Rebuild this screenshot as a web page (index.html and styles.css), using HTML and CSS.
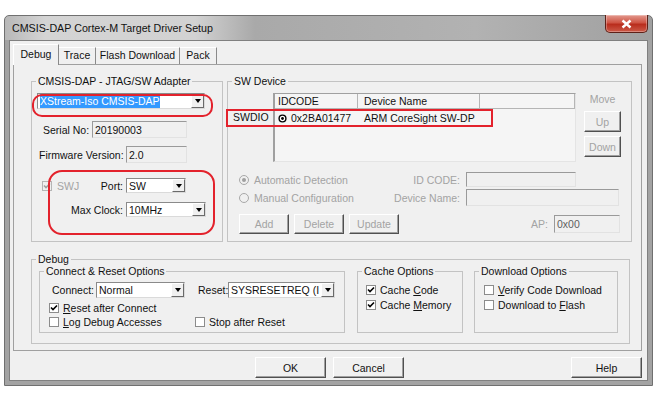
FILE: index.html
```html
<!DOCTYPE html>
<html lang="en">
<head>
  <meta charset="UTF-8" />
  <meta name="viewport" content="width=device-width, initial-scale=1.0"/>
  <title>CMSIS-DAP Cortex-M Target Driver Setup</title>
  <link rel="stylesheet" href="styles.css">
</head>
<body>
  <div class="window">
    <div class="titlebar">
      <span class="title">CMSIS-DAP Cortex-M Target Driver Setup</span>
      <span class="close"><svg width="13" height="10" viewBox="0 0 13 10"><path d="M2.5 1.5 L10.5 8.5 M10.5 1.5 L2.5 8.5" stroke="#fff" stroke-width="2.4"/></svg></span>
    </div>
    <div class="client">
      <div class="tabs">
        <span class="tab tab-debug active">Debug</span>
        <span class="tab tab-trace">Trace</span>
        <span class="tab tab-flash">Flash Download</span>
        <span class="tab tab-pack">Pack</span>
      </div>
      <div class="panel">
        <div class="top-row">
          <fieldset class="group adapter">
            <legend>CMSIS-DAP - JTAG/SW Adapter</legend>
            <div class="group-body">
              <div class="row row-adapter">
                <div class="combo w-adapter"><span class="val"><span class="hl">XStream-Iso CMSIS-DAP</span></span><span class="drop"></span></div>
              </div>
              <div class="row row-serial">
                <span class="lbl lbl-serial">Serial No:</span>
                <span class="field readonly w-serial">20190003</span>
              </div>
              <div class="row row-fw">
                <span class="lbl lbl-fw">Firmware Version:</span>
                <span class="field readonly w-fw">2.0</span>
              </div>
              <div class="row row-port">
                <span class="lbl lbl-port">
                  <span class="chk disabled"><svg width="8" height="8" viewBox="0 0 8 8"><path d="M1 3.5 L3 5.5 L7 1.5" stroke="#a0a0a0" stroke-width="1.6" fill="none"/></svg></span>
                  <span class="dim swj">SWJ</span>
                  <span class="port-text">Port:</span>
                </span>
                <div class="combo w-port"><span class="val">SW</span><span class="drop"></span></div>
              </div>
              <div class="row row-clock">
                <span class="lbl lbl-clock">Max Clock:</span>
                <div class="combo w-clock"><span class="val">10MHz</span><span class="drop"></span></div>
              </div>
              <div class="mark mark-adapter"></div>
              <div class="mark mark-port"></div>
            </div>
          </fieldset>

          <fieldset class="group swdev">
            <legend>SW Device</legend>
            <div class="group-body">
              <div class="dev-row">
                <div class="rowhead"><span>SWDIO</span></div>
                <div class="devlist">
                  <div class="dl-head">
                    <span class="c1">IDCODE</span>
                    <span class="c2">Device Name</span>
                    <span class="c3"></span>
                  </div>
                  <div class="dl-row">
                    <span class="c1"><svg class="dot" width="9" height="9" viewBox="0 0 9 9"><circle cx="4.5" cy="4.5" r="3.4" stroke="#000" stroke-width="1.4" fill="#fff"/><circle cx="4.5" cy="4.5" r="1.4" fill="#000"/></svg>0x2BA01477</span>
                    <span class="c2">ARM CoreSight SW-DP</span>
                  </div>
                </div>
                <div class="move">
                  <span class="move-lbl">Move</span>
                  <span class="btn btn-move dim">Up</span>
                  <span class="btn btn-move dim">Down</span>
                </div>
                <div class="mark mark-dev"></div>
              </div>
              <div class="opt-row opt1">
                <span class="radio-cell dim"><span class="radio checked"></span>Automatic Detection</span>
                <span class="opt-lbl dim">ID CODE:</span>
                <span class="field disabled w-idcode"></span>
              </div>
              <div class="opt-row opt2">
                <span class="radio-cell dim"><span class="radio"></span>Manual Configuration</span>
                <span class="opt-lbl dim">Device Name:</span>
                <span class="field disabled w-devname"></span>
              </div>
              <div class="opt-row opt3">
                <span class="btn btn-edit dim first">Add</span>
                <span class="btn btn-edit dim">Delete</span>
                <span class="btn btn-edit dim">Update</span>
                <span class="ap dim">AP:</span>
                <span class="field disabled w-ap">0x00</span>
              </div>
            </div>
          </fieldset>
        </div>

        <fieldset class="group debug">
          <legend>Debug</legend>
          <div class="debug-row">
            <fieldset class="group conn">
              <legend>Connect &amp; Reset Options</legend>
              <div class="row conn-row">
                <span class="lbl lbl-connect">Connect:</span>
                <div class="combo w-connect"><span class="val">Normal</span><span class="drop"></span></div>
                <span class="lbl lbl-reset">Reset:</span>
                <div class="combo w-reset"><span class="val">SYSRESETREQ (I</span><span class="drop"></span></div>
              </div>
              <div class="chk-row cr1">
                <span class="chk-item"><span class="chk"><svg width="8" height="8" viewBox="0 0 8 8"><path d="M1 3.5 L3 5.5 L7 1.5" stroke="#000" stroke-width="1.6" fill="none"/></svg></span><span><u>R</u>eset after Connect</span></span>
              </div>
              <div class="chk-row cr2">
                <span class="chk-item item-log"><span class="chk"></span><span><u>L</u>og Debug Accesses</span></span>
                <span class="chk-item"><span class="chk"></span><span>Stop after Reset</span></span>
              </div>
            </fieldset>

            <fieldset class="group cache">
              <legend>Cache Options</legend>
              <div class="chk-row cr1">
                <span class="chk-item"><span class="chk"><svg width="8" height="8" viewBox="0 0 8 8"><path d="M1 3.5 L3 5.5 L7 1.5" stroke="#000" stroke-width="1.6" fill="none"/></svg></span><span>Cache <u>C</u>ode</span></span>
              </div>
              <div class="chk-row cr2">
                <span class="chk-item"><span class="chk"><svg width="8" height="8" viewBox="0 0 8 8"><path d="M1 3.5 L3 5.5 L7 1.5" stroke="#000" stroke-width="1.6" fill="none"/></svg></span><span>Cache <u>M</u>emory</span></span>
              </div>
            </fieldset>

            <fieldset class="group dl">
              <legend>Download Options</legend>
              <div class="chk-row cr1">
                <span class="chk-item"><span class="chk"></span><span><u>V</u>erify Code Download</span></span>
              </div>
              <div class="chk-row cr2">
                <span class="chk-item"><span class="chk"></span><span>Download to <u>F</u>lash</span></span>
              </div>
            </fieldset>
          </div>
        </fieldset>
      </div>

      <div class="actions">
        <span class="btn btn-dlg">OK</span>
        <span class="btn btn-dlg">Cancel</span>
        <span class="btn btn-dlg help">Help</span>
      </div>
    </div>
  </div>
</body>
</html>
```

FILE: styles.css
```css
* { box-sizing: border-box; }
body { margin: 0; background: #fff; font-family: "Liberation Sans", Arial, sans-serif; font-size: 10.5px; color: #111; }

/* window frame */
.window { width: 649px; height: 371px; margin: 15px 0 0 4px; padding: 0 4px 4px; border: 1px solid #707070; border-radius: 5px 5px 0 0; display: flex; flex-direction: column;
  background: linear-gradient(180deg, transparent 24px, #a3a3a3 24px), linear-gradient(90deg, #b8b8b8, #d4d4d4 40px, #d2d2d2 190px, #a9a9a9 250px, #b2b2b2 470px, #a0a0a0); }
.titlebar { height: 24px; display: flex; align-items: flex-start; justify-content: space-between; }
.title { margin: 6px 0 0 3px; font-size: 10.7px; color: #111; }
.close { width: 43px; height: 18px; margin-top: -1px; display: flex; align-items: center; justify-content: center; border: 1px solid #5e2118; border-top: none; border-radius: 0 0 5px 5px;
  background: linear-gradient(#e39a8f, #cf5444 45%, #b92d1d 55%, #cc5a48); box-shadow: inset 0 0 0 1px rgba(255,255,255,0.3); }

.client { flex: 1; background: #f0f0f0; border: 1px solid #808080; padding: 3px 5px 0 3px; }

/* tabs */
.tabs { display: flex; align-items: flex-end; height: 20px; }
.tab { height: 17px; line-height: 15px; text-align: center; border-top: 1px solid #fff; border-right: 1px solid #8a8a8a; }
.tab.active { height: 21px; line-height: 19px; margin-bottom: -1px; border-left: 1px solid #fff; background: #f0f0f0; position: relative; z-index: 1; }
.tab-debug { width: 46px; }
.tab-trace { width: 37px; }
.tab-flash { width: 84px; }
.tab-pack { width: 37px; }

.panel { height: 287px; border: 1px solid #a0a0a0; padding: 9px 0 0 17px; }
.top-row { display: flex; gap: 4px; }

/* group boxes */
.group { margin: 0; padding: 0; min-width: 0; border: 1px solid #c3c3c3; }
.group legend { margin-left: 4px; padding: 0 2px; line-height: 14px; }
.group-body { position: relative; }
.adapter { width: 192px; height: 168px; }
.swdev { width: 405px; height: 168px; }

.row { display: flex; align-items: center; }
.lbl { white-space: nowrap; }
.dim { color: #a3a3a3; }

/* controls */
.combo { display: flex; height: 16px; background: #fff; border: 1px solid; border-color: #8a8a8a #dadada #dadada #8a8a8a; }
.combo .val { flex: 1; display: flex; align-items: center; padding-left: 2px; overflow: hidden; white-space: nowrap; }
.drop { width: 13px; flex: none; display: flex; align-items: center; justify-content: center; background: #f0f0f0; border: 1px solid; border-color: #fff #6a6a6a #6a6a6a #fff; }
.drop::after { content: ""; border-left: 3.5px solid transparent; border-right: 3.5px solid transparent; border-top: 4px solid #000; }
.hl { background: #3399ff; color: #fff; padding: 1px 0; }

.field { height: 100%; display: flex; align-items: center; padding-left: 2px; border: 1px solid; border-color: #9a9a9a #e2e2e2 #e2e2e2 #9a9a9a; }
.field.readonly { background: #f0f0f0; }
.field.disabled { background: #f0f0f0; color: #606060; }

.btn { display: flex; align-items: center; justify-content: center; background: #f0f0f0; border: 1px solid; border-color: #fff #505050 #505050 #fff; box-shadow: inset -1px -1px #a0a0a0; }

.chk { width: 10px; height: 10px; flex: none; display: inline-flex; align-items: center; justify-content: center; background: #fff; border: 1px solid #8c8c8c; }
.chk.disabled { background: #f0f0f0; border-color: #b5b5b5; }
.radio { width: 10px; height: 10px; flex: none; border-radius: 50%; border: 1px solid #a8a8a8; background: #f0f0f0; display: inline-flex; align-items: center; justify-content: center; }
.radio.checked::after { content: ""; width: 4px; height: 4px; border-radius: 50%; background: #a0a0a0; }

/* adapter group */
.row-adapter { margin-top: 5px; padding-left: 5px; }
.w-adapter { width: 168px; }
.row-serial { margin-top: 12px; height: 17px; }
.lbl-serial { width: 60px; padding-left: 11px; }
.w-serial { width: 95px; }
.row-fw { margin-top: 8px; height: 17px; }
.lbl-fw { width: 94px; padding-left: 7px; }
.w-fw { width: 61px; }
.row-port { margin-top: 15px; height: 15px; }
.lbl-port { width: 94px; display: flex; align-items: center; padding-left: 10px; }
.swj { margin-left: 5px; }
.port-text { margin-left: auto; padding-right: 3px; }
.w-port { width: 60px; height: 15px; }
.row-clock { margin-top: 9px; height: 15px; }
.lbl-clock { width: 94px; text-align: right; padding-right: 3px; }
.w-clock { width: 80px; height: 15px; }

/* red annotation marks */
.mark { position: absolute; border: 2px solid #e3222c; border-radius: 10px; }
.mark-adapter { left: 0; top: 1px; width: 181px; height: 23px; }
.mark-port { left: 16px; top: 77px; width: 167px; height: 65px; border-radius: 14px; }
.mark-dev { left: -2px; top: 16px; width: 267px; height: 18px; border-radius: 0; }

/* sw device group */
.dev-row { display: flex; margin-top: 5px; position: relative; }
.rowhead { width: 45px; padding-top: 15px; }
.rowhead span { display: block; height: 18px; line-height: 18px; padding-left: 5px; }
.devlist { width: 303px; height: 69px; background: #f5f5f5; border-left: 2px solid #a0a0a0; border-top: 1px solid #a0a0a0; border-right: 1px solid #e4e4e4; border-bottom: 1px solid #e4e4e4; }
.dl-head { display: flex; height: 15px; border-bottom: 1px solid #b5b5b5; }
.dl-head span { display: flex; align-items: center; border-right: 1px solid #b5b5b5; }
.dl-row { display: flex; height: 18px; align-items: center; }
.c1 { width: 83px; padding-left: 3px; display: flex; align-items: center; }
.c2 { width: 122px; padding-left: 6px; }
.c3 { width: 95px; }
.dot { margin-right: 4px; }
.move { width: 37px; margin-left: 8px; display: flex; flex-direction: column; }
.move-lbl { height: 18px; line-height: 12px; text-align: center; color: #a3a3a3; }
.btn-move { height: 21px; margin-bottom: 4px; }

.opt-row { display: flex; align-items: center; }
.opt1 { margin-top: 10px; height: 15px; }
.opt2 { margin-top: 2px; height: 17px; }
.opt3 { margin-top: 8px; height: 20px; padding-right: 11px; }
.radio-cell { width: 160px; padding-left: 11px; display: flex; align-items: center; gap: 5px; white-space: nowrap; }
.opt-lbl { width: 72px; text-align: right; white-space: nowrap; }
.w-idcode { width: 110px; margin-left: 6px; }
.w-devname { width: 153px; margin-left: 6px; }
.btn-edit { width: 50px; height: 20px; margin-left: 5px; }
.btn-edit.first { margin-left: 11px; }
.ap { margin-left: auto; margin-right: 6px; }
.w-ap { width: 66px; height: 18px; }

/* debug group */
.debug { width: 599px; height: 92px; margin-top: 10px; }
.debug-row { display: flex; margin-top: -2px; padding-left: 7px; }
.conn { width: 306px; height: 69px; }
.cache { width: 106px; height: 69px; margin-left: 12px; }
.dl { width: 144px; height: 69px; margin-left: 11px; }
.conn-row { margin-top: 4px; height: 16px; }
.lbl-connect { width: 56px; padding-left: 12px; }
.w-connect { width: 89px; }
.lbl-reset { width: 30px; margin-left: 13px; }
.w-reset { width: 107px; }
.chk-row { display: flex; align-items: center; height: 11px; white-space: nowrap; }
.chk-item { display: flex; align-items: center; gap: 4px; }
.conn .chk-row { padding-left: 9px; }
.conn .cr1 { margin-top: 4px; }
.conn .cr2 { margin-top: 3px; }
.item-log { width: 146px; }
.cache .chk-row { padding-left: 8px; }
.dl .chk-row { padding-left: 9px; }
.cache .cr1, .dl .cr1 { margin-top: 6px; }
.cache .cr2, .dl .cr2 { margin-top: 4px; }

/* dialog buttons */
.actions { display: flex; gap: 7px; margin-top: 6px; padding-left: 242px; }
.btn-dlg { width: 71px; height: 21px; }
.help { margin-left: auto; }
```
